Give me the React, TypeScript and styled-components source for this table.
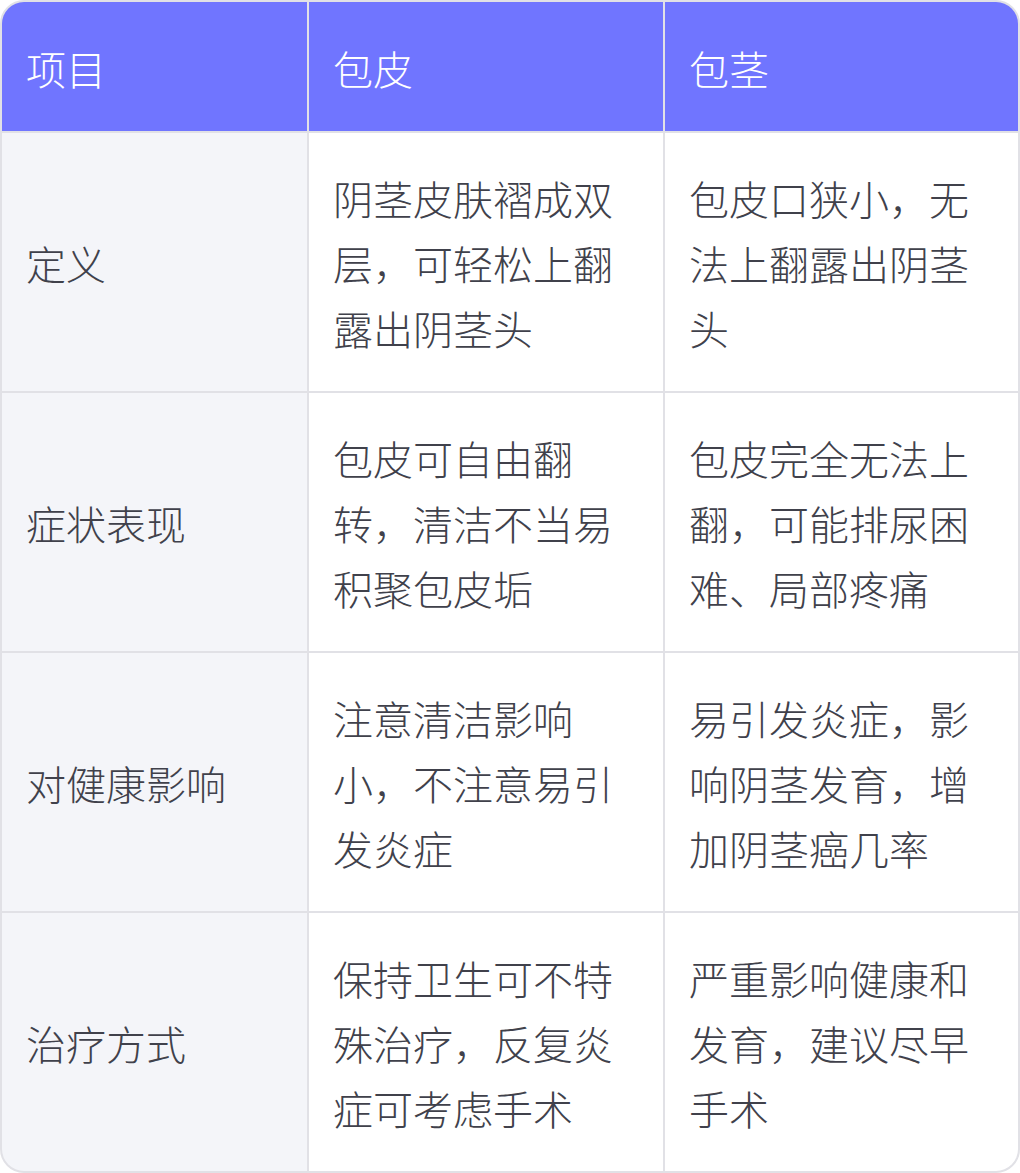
import React from "react";
import styled, { createGlobalStyle } from "styled-components";

const Global = createGlobalStyle`
  html, body { margin: 0; padding: 0; background: #ffffff; }
  body { font-family: "Noto Sans CJK SC", "Noto Sans", sans-serif; }
`;

const Frame = styled.div`
  width: 1020px;
  box-sizing: border-box;
  border: 2px solid #e1e1e6;
  border-radius: 24px;
  overflow: hidden;
  background: #e1e1e6;
`;

const Grid = styled.div`
  display: grid;
  grid-template-columns: 305px 354px 353px;
  grid-template-rows: 129px repeat(4, 258px);
  gap: 2px;
`;

const HeaderCell = styled.div`
  background: #7075ff;
  color: #ffffff;
  font-size: 40px;
  font-weight: 300;
  line-height: 65px;
  padding: 3px 24px 0 24px;
  display: flex;
  align-items: center;
`;

const Cell = styled.div<{ $label?: boolean }>`
  background: ${(p) => (p.$label ? "#f4f5f9" : "#ffffff")};
  color: #40414b;
  font-size: 40px;
  font-weight: 300;
  line-height: 65px;
  padding: 2px 22px 0 24px;
  display: flex;
  align-items: center;
  word-break: break-all;
`;

const headers = ["项目", "包皮", "包茎"];

const rows: [string, string, string][] = [
  ["定义", "阴茎皮肤褶成双层，可轻松上翻露出阴茎头", "包皮口狭小，无法上翻露出阴茎头"],
  ["症状表现", "包皮可自由翻转，清洁不当易积聚包皮垢", "包皮完全无法上翻，可能排尿困难、局部疼痛"],
  ["对健康影响", "注意清洁影响小，不注意易引发炎症", "易引发炎症，影响阴茎发育，增加阴茎癌几率"],
  ["治疗方式", "保持卫生可不特殊治疗，反复炎症可考虑手术", "严重影响健康和发育，建议尽早手术"],
];

export default function App() {
  return (
    <>
      <Global />
      <Frame>
        <Grid>
          {headers.map((h) => (
            <HeaderCell key={h}>{h}</HeaderCell>
          ))}
          {rows.map((r) => (
            <React.Fragment key={r[0]}>
              <Cell $label>{r[0]}</Cell>
              <Cell>{r[1]}</Cell>
              <Cell>{r[2]}</Cell>
            </React.Fragment>
          ))}
        </Grid>
      </Frame>
    </>
  );
}
